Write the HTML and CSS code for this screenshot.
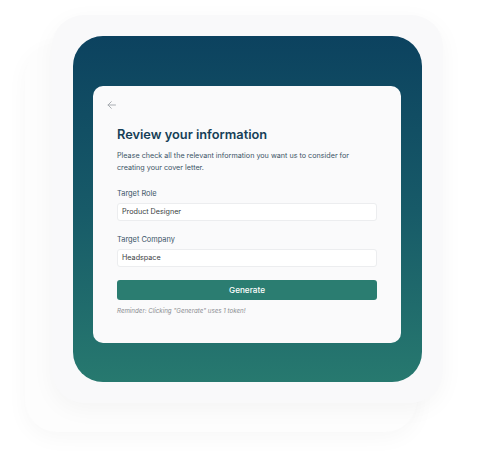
FILE: index.html
```html
<!DOCTYPE html>
<html>
<head>
<meta charset="utf-8">
<link rel="stylesheet" href="styles.css">
</head>
<body>
<div class="stage">
  <div class="back-card"></div>
  <div class="front-card">
    <div class="panel">
      <div class="sheet">
        <svg class="back-arrow" width="9" height="8" viewBox="0 0 9 8" fill="none" stroke="#a9adb2" stroke-width="1" stroke-linecap="round" stroke-linejoin="round"><path d="M8.5 4H1M4.3 0.7L1 4l3.3 3.3"/></svg>
        <div class="content">
          <h1 class="title">Review your information</h1>
          <p class="desc">Please check all the relevant information you want us to consider for creating your cover letter.</p>
          <label class="label">Target Role</label>
          <div class="field">Product Designer</div>
          <label class="label">Target Company</label>
          <div class="field">Headspace</div>
          <div class="button">Generate</div>
          <p class="note">Reminder: Clicking "Generate" uses 1 token!</p>
        </div>
      </div>
    </div>
  </div>
</div>
</body>
</html>
```
FILE: styles.css
```css
html, body {
  margin: 0;
  padding: 0;
  background: #ffffff;
  font-family: Inter, "Noto Sans", sans-serif;
}
.stage {
  position: relative;
  width: 500px;
  height: 457px;
  padding: 15px 0 0 52px;
  box-sizing: border-box;
}
.back-card {
  position: absolute;
  left: 25px;
  top: 44px;
  width: 392px;
  height: 388px;
  border-radius: 32px;
  background: #fdfdfd;
  box-shadow: 0 6px 22px rgba(0, 0, 0, 0.035);
}
.front-card {
  position: relative;
  width: 391px;
  height: 388px;
  box-sizing: border-box;
  padding: 21px;
  border-radius: 32px;
  background: #f9f9fa;
  box-shadow: 0 6px 24px rgba(0, 0, 0, 0.04);
}
.panel {
  width: 349px;
  height: 346px;
  box-sizing: border-box;
  padding: 50px 21px 39px 20px;
  border-radius: 30px;
  background: linear-gradient(180deg, #0c425f 0%, #175a68 50%, #27796f 100%);
}
.sheet {
  position: relative;
  height: 257px;
  border-radius: 10px;
  background: #fafafb;
  box-sizing: border-box;
  padding: 15px 24px 0 14px;
}
.back-arrow {
  display: block;
}
.content {
  padding: 17px 0 0 10px;
}
.title {
  margin: 0;
  font-size: 12.8px;
  line-height: 18px;
  font-weight: 600;
  color: #163f57;
}
.desc {
  margin: 6px 0 0;
  font-size: 7.2px;
  line-height: 12px;
  color: #3b5466;
}
.label {
  display: block;
  margin-top: 15px;
  font-size: 7.4px;
  line-height: 10px;
  color: #3a5567;
}
.field {
  margin-top: 4px;
  height: 18px;
  box-sizing: border-box;
  padding-left: 4px;
  border: 1px solid #ecedef;
  border-radius: 3px;
  background: #ffffff;
  font-size: 7.2px;
  line-height: 16px;
  color: #3a3e42;
}
.field + .label {
  margin-top: 14px;
}
.button {
  margin-top: 13px;
  height: 20px;
  border-radius: 3px;
  background: #2b7d71;
  color: #ffffff;
  font-size: 8.2px;
  font-weight: 500;
  line-height: 20px;
  text-align: center;
}
.note {
  margin: 6px 0 0;
  font-size: 6.2px;
  line-height: 9px;
  font-style: italic;
  color: #8a8d91;
}
```
